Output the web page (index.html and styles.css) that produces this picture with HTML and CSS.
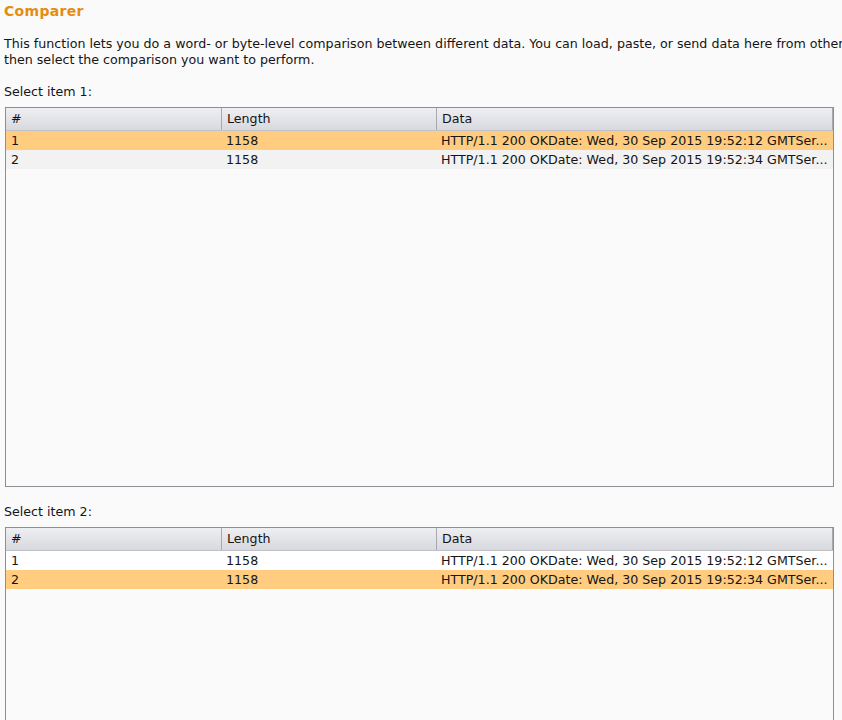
FILE: index.html
```html
<!DOCTYPE html>
<html>
<head>
<meta charset="utf-8">
<link rel="stylesheet" href="styles.css">
</head>
<body>
<div class="page">
  <h1 class="title">Comparer</h1>
  <p class="intro">This function lets you do a word- or byte-level comparison between different data. You can load, paste, or send data here from other tools and<br>then select the comparison you want to perform.</p>

  <div class="label label-first">Select item 1:</div>
  <div class="table">
    <div class="row head">
      <div class="cell">#</div>
      <div class="cell">Length</div>
      <div class="cell">Data</div>
    </div>
    <div class="row sel">
      <div class="cell">1</div>
      <div class="cell">1158</div>
      <div class="cell">HTTP/1.1 200 OKDate: Wed, 30 Sep 2015 19:52:12 GMTSer...</div>
    </div>
    <div class="row alt">
      <div class="cell">2</div>
      <div class="cell">1158</div>
      <div class="cell">HTTP/1.1 200 OKDate: Wed, 30 Sep 2015 19:52:34 GMTSer...</div>
    </div>
  </div>

  <div class="label label-second">Select item 2:</div>
  <div class="table table-second">
    <div class="row head">
      <div class="cell">#</div>
      <div class="cell">Length</div>
      <div class="cell">Data</div>
    </div>
    <div class="row plain">
      <div class="cell">1</div>
      <div class="cell">1158</div>
      <div class="cell">HTTP/1.1 200 OKDate: Wed, 30 Sep 2015 19:52:12 GMTSer...</div>
    </div>
    <div class="row sel">
      <div class="cell">2</div>
      <div class="cell">1158</div>
      <div class="cell">HTTP/1.1 200 OKDate: Wed, 30 Sep 2015 19:52:34 GMTSer...</div>
    </div>
  </div>
</div>
</body>
</html>
```

FILE: styles.css
```css
html, body {
  margin: 0;
  padding: 0;
  background: #fafafa;
  overflow: hidden;
}
body {
  width: 842px;
  height: 720px;
  font-family: "DejaVu Sans", sans-serif;
  font-size: 12.65px;
  color: #151515;
}
.page {
  padding: 0 0 0 4px;
  width: 1100px;
}
.title {
  margin: 0;
  padding-top: 2px;
  font-size: 14px;
  font-weight: bold;
  color: #e58c0f;
  line-height: 19px;
  letter-spacing: 0.3px;
}
.intro {
  margin: 15px 0 0 0;
  width: 1080px;
  line-height: 16px;
  white-space: nowrap;
}
.label {
  line-height: 16px;
}
.label-first {
  margin-top: 16px;
}
.label-second {
  margin-top: 17px;
}
.table {
  margin-top: 7px;
  margin-left: 1px;
  width: 827px;
  height: 378px;
  border: 1px solid #8d8f96;
  background: #fafafa;
}
.table-second {
  margin-top: 7px;
}
.row {
  display: grid;
  grid-template-columns: 215px 215px 1fr;
  height: 19px;
  line-height: 19px;
}
.cell {
  padding-left: 5px;
  white-space: nowrap;
  overflow: hidden;
}
.head {
  height: 22px;
  line-height: 21px;
  background: linear-gradient(#eeeff2, #d8d9de);
  border-bottom: 1px solid #bfc1c7;
}
.head .cell + .cell {
  border-left: 1px solid #a7a9af;
}
.head .cell:last-child {
  border-right: 1px solid #a7a9af;
}
.sel {
  background: #ffcc80;
}
.alt {
  background: #f2f2f2;
}
.plain {
  background: #ffffff;
}
```
